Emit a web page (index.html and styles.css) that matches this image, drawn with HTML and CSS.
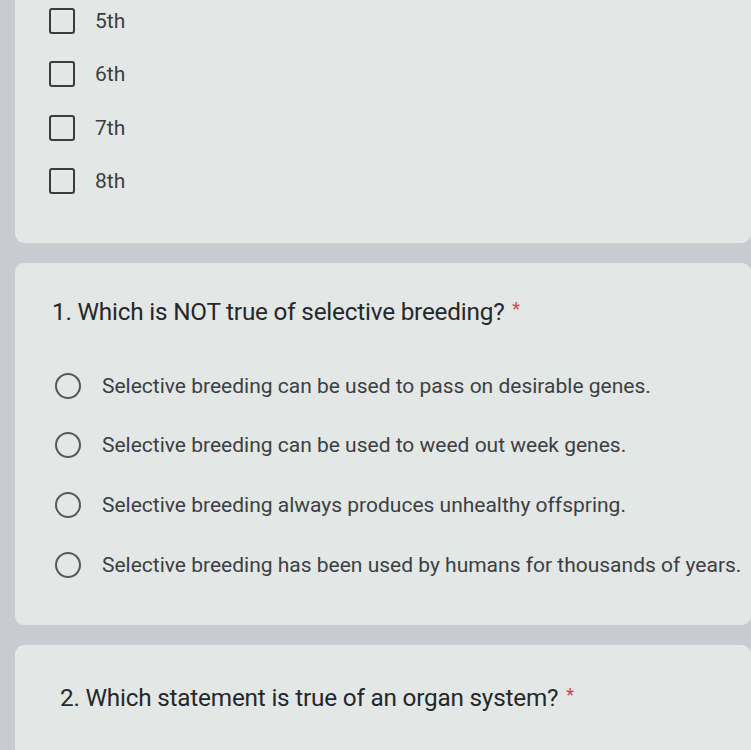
FILE: index.html
```html
<!DOCTYPE html>
<html>
<head>
<meta charset="utf-8">
<link rel="stylesheet" href="styles.css">
</head>
<body>
<div class="page">
  <section class="card card-top">
    <ul class="checks">
      <li class="check-row"><span class="box"></span><span class="label">5th</span></li>
      <li class="check-row"><span class="box"></span><span class="label">6th</span></li>
      <li class="check-row"><span class="box"></span><span class="label">7th</span></li>
      <li class="check-row"><span class="box"></span><span class="label">8th</span></li>
    </ul>
  </section>
  <section class="card card-q1">
    <h2 class="question">1. Which is NOT true of selective breeding? <span class="req">*</span></h2>
    <ul class="radios">
      <li class="radio-row"><span class="circle"></span><span class="opt">Selective breeding can be used to pass on desirable genes.</span></li>
      <li class="radio-row"><span class="circle"></span><span class="opt">Selective breeding can be used to weed out week genes.</span></li>
      <li class="radio-row"><span class="circle"></span><span class="opt">Selective breeding always produces unhealthy offspring.</span></li>
      <li class="radio-row"><span class="circle"></span><span class="opt">Selective breeding has been used by humans for thousands of years.</span></li>
    </ul>
  </section>
  <section class="card card-q2">
    <h2 class="question q2">2. Which statement is true of an organ system? <span class="req">*</span></h2>
  </section>
</div>
</body>
</html>
```

FILE: styles.css
```css
html, body {
  margin: 0;
  padding: 0;
}
body {
  background: #c8ccd0;
  font-family: Roboto, "Noto Sans", sans-serif;
  color: #35393c;
  width: 751px;
  height: 750px;
  overflow: hidden;
}
.page {
  padding-left: 15px;
  display: flex;
  flex-direction: column;
  gap: 20px;
}
.card {
  background: #e3e7e5;
  border-radius: 9px;
}
.card-top {
  height: 243px;
  border-top-left-radius: 0;
  border-top-right-radius: 0;
  box-sizing: border-box;
  padding-top: 7px;
}
.checks, .radios {
  list-style: none;
  margin: 0;
  padding: 0;
}
.checks {
  display: flex;
  flex-direction: column;
  gap: 25.3px;
  padding-left: 34px;
}
.check-row {
  display: flex;
  align-items: center;
  height: 28px;
}
.box {
  width: 22px;
  height: 22px;
  border: 2.5px solid #3a3d40;
  border-radius: 3px;
  flex: none;
}
.label {
  margin-left: 20px;
  font-size: 21px;
  color: #3a3e42;
}
.card-q1 {
  height: 362px;
  box-sizing: border-box;
  padding-top: 34px;
}
.question {
  margin: 0;
  font-weight: 400;
  font-size: 24.3px;
  color: #25282b;
  padding-left: 37px;
  letter-spacing: -0.2px;
}
.req {
  color: #d0463e;
  font-size: 18px;
  vertical-align: 5px;
  margin-left: 2px;
}
.radios {
  margin-top: 46px;
  display: flex;
  flex-direction: column;
  gap: 32.7px;
  padding-left: 40px;
}
.radio-row {
  display: flex;
  align-items: center;
  height: 27px;
}
.circle {
  width: 22px;
  height: 22px;
  border: 2.5px solid #55595d;
  border-radius: 50%;
  flex: none;
}
.opt {
  margin-left: 21px;
  font-size: 21px;
  color: #3c4044;
}
.card-q2 {
  height: 140px;
  box-sizing: border-box;
  padding-top: 38px;
}
.q2 {
  padding-left: 45px;
}
```
